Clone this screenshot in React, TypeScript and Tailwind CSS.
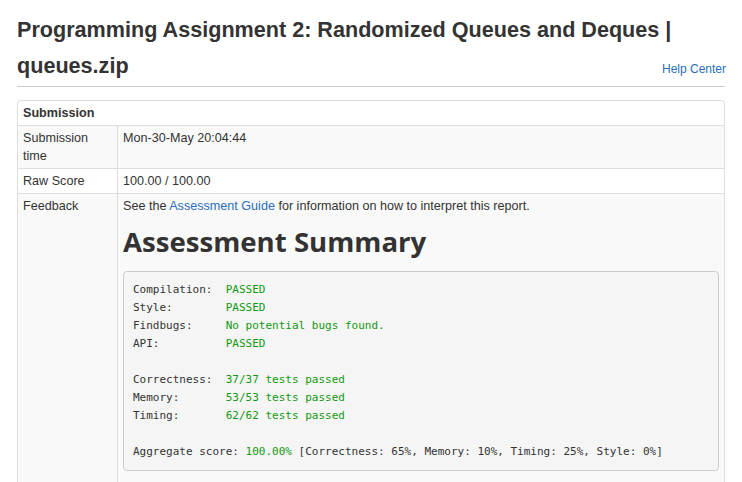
import React from "react";

const sans = "font-['Liberation_Sans',Arial,sans-serif]";
const mono = "font-['DejaVu_Sans_Mono',monospace]";

type Line = { label?: string; value?: string };

const lines: Line[] = [
  { label: "Compilation:  ", value: "PASSED" },
  { label: "Style:        ", value: "PASSED" },
  { label: "Findbugs:     ", value: "No potential bugs found." },
  { label: "API:          ", value: "PASSED" },
  {},
  { label: "Correctness:  ", value: "37/37 tests passed" },
  { label: "Memory:       ", value: "53/53 tests passed" },
  { label: "Timing:       ", value: "62/62 tests passed" },
  {},
];

function Summary() {
  return (
    <pre
      className={`${mono} text-[11px] leading-[18px] text-[#333] bg-[#f5f5f5] border border-[#ccc] rounded-[4px] px-[9px] py-[9px] whitespace-pre`}
    >
      {lines.map((l, i) => (
        <div key={i} className="h-[18px]">
          {l.label}
          <span className="text-[#119911]">{l.value}</span>
        </div>
      ))}
      <div className="h-[18px]">
        Aggregate score: <span className="text-[#119911]">100.00%</span> [Correctness: 65%, Memory: 10%, Timing: 25%, Style: 0%]
      </div>
    </pre>
  );
}

export default function App() {
  return (
    <div className={`${sans} w-[742px] h-[482px] overflow-hidden bg-white text-[#333] px-[17px]`}>
      <div className="border-b border-[#ccc] pt-[12px] pb-[2px]">
        <h3 className="text-[21.6px] font-bold leading-[36px] text-[#333] whitespace-nowrap">
          Programming Assignment 2: Randomized Queues and Deques |
        </h3>
        <div className="flex items-baseline justify-between">
          <h3 className="text-[21.6px] font-bold leading-[36px] text-[#333]">queues.zip</h3>
          <a className="text-[12px] text-[#2a6ebb] leading-[18px] mr-[-1px]">Help Center</a>
        </div>
      </div>

      <div className="mt-[13px] border border-[#ddd] rounded-[4px] text-[12.6px] leading-[18px]">
        <div className="font-bold px-[5px] py-[3px] border-b border-[#ddd]">Submission</div>
        <div className="flex bg-[#f9f9f9] border-b border-[#ddd]">
          <div className="w-[100px] shrink-0 border-r border-[#ddd] px-[5px] py-[3px]">
            Submission
            <br />
            time
          </div>
          <div className="flex-1 px-[5px] py-[3px]">Mon-30-May 20:04:44</div>
        </div>
        <div className="flex border-b border-[#ddd]">
          <div className="w-[100px] shrink-0 border-r border-[#ddd] px-[5px] py-[3px]">Raw Score</div>
          <div className="flex-1 px-[5px] py-[3px]">100.00 / 100.00</div>
        </div>
        <div className="flex bg-[#f9f9f9]">
          <div className="w-[100px] shrink-0 border-r border-[#ddd] px-[5px] py-[3px]">Feedback</div>
          <div className="flex-1 min-w-0 px-[5px] py-[3px]">
            <p>
              See the <a className="text-[#2a6ebb]">Assessment Guide</a> for information on how to interpret this report.
            </p>
            <h1 className="font-['Open_Sans',sans-serif] text-[27.6px] font-bold leading-[30px] mt-[11px] mb-[15px] text-[#333]">
              Assessment Summary
            </h1>
            <Summary />
            <div className="h-[40px]" />
          </div>
        </div>
      </div>
    </div>
  );
}
